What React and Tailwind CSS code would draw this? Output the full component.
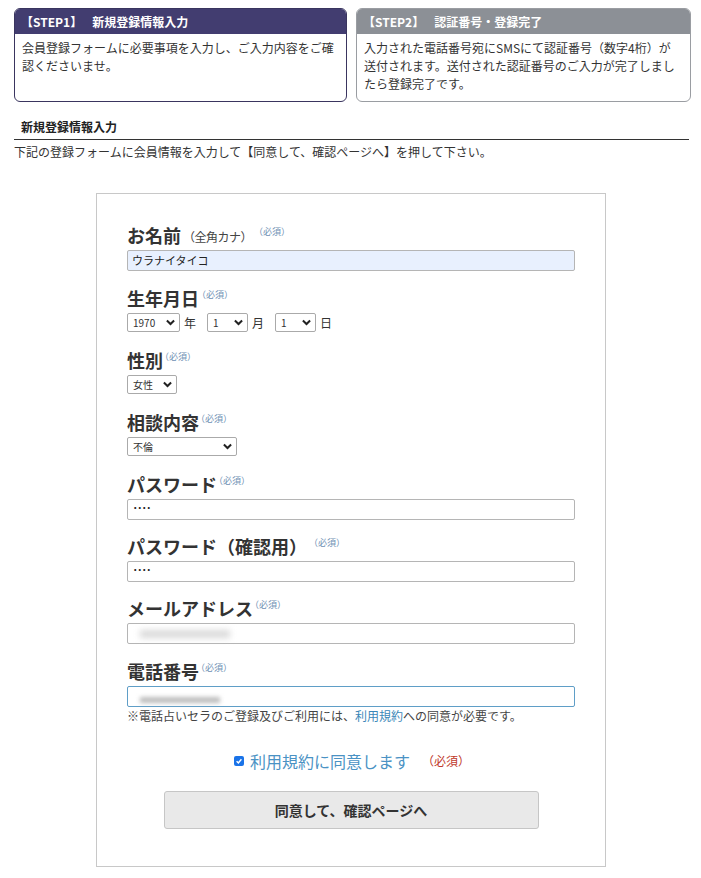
import React from "react";

const Req = ({ className = "" }) => (
  <span className={`text-[9px] text-[#6f8fb3] self-start mt-[1px] ${className}`}>（必須）</span>
);

const Label = ({ children, sub, gap = "ml-0" }) => (
  <div className="flex items-end h-[22px] mb-[4px]">
    <span className="text-[18px] font-bold text-[#333] leading-[22px]">{children}</span>
    {sub && <span className="text-[12px] text-[#444] ml-[2px] leading-[18px] tracking-[-0.5px]">{sub}</span>}
    <Req className={gap} />
  </div>
);

const Chevron = () => (
  <svg width="9" height="7" viewBox="0 0 10 7" className="shrink-0">
    <path d="M1 1.2 L5 5.2 L9 1.2" fill="none" stroke="#222" strokeWidth="2.2" />
  </svg>
);

const Select = ({ value, w }) => (
  <div className={`flex items-center justify-between h-[19px] border border-[#aaa] rounded-[2px] bg-white pl-[5px] pr-[4px] ${w}`}>
    <span className="text-[10px] text-[#333]">{value}</span>
    <Chevron />
  </div>
);

const Input = ({ children, className = "bg-white border-[#b5b5b5]" }) => (
  <div className={`h-[21px] w-[448px] border rounded-[2px] flex items-center px-[4px] ${className}`}>
    {children}
  </div>
);

const Dots = () => (
  <span className="text-[11px] font-bold text-[#222] leading-none tracking-[-2px] -mt-[4px]">····</span>
);

export default function App() {
  return (
    <div className="w-[701px] min-h-[878px] bg-white text-[#333] font-['Noto_Sans_CJK_JP','Noto_Sans',sans-serif]">
      {/* Steps */}
      <div className="flex gap-[9px] pl-[14px] pt-[8px]">
        <div className="w-[333px] h-[94px] border border-[#3a355f] rounded-[6px] overflow-hidden">
          <div className="h-[25px] bg-[#423d70] flex items-center pl-[6px] text-white text-[12px] font-bold">
            【STEP1】<span className="ml-[10px]">新規登録情報入力</span>
          </div>
          <p className="px-[7px] pt-[5px] text-[12px] leading-[18px] text-[#333]">
            会員登録フォームに必要事項を入力し、ご入力内容をご確認くださいませ。
          </p>
        </div>
        <div className="w-[335px] h-[94px] border border-[#9a9da2] rounded-[6px] overflow-hidden">
          <div className="h-[25px] bg-[#8c9096] flex items-center pl-[6px] text-white text-[12px] font-bold">
            【STEP2】<span className="ml-[10px]">認証番号・登録完了</span>
          </div>
          <p className="pl-[7px] pr-[14px] pt-[5px] text-[12px] leading-[18px] text-[#333]">
            入力された電話番号宛にSMSにて認証番号（数字4桁）が送付されます。送付された認証番号のご入力が完了しましたら登録完了です。
          </p>
        </div>
      </div>

      {/* Section title */}
      <div className="ml-[14px] w-[675px] mt-[16px] border-b border-[#333] pl-[7px] pb-[3px]">
        <h2 className="text-[12px] font-bold leading-[18px] text-[#222]">新規登録情報入力</h2>
      </div>
      <p className="ml-[14px] mt-[3px] text-[12px] leading-[18px] text-[#333]">
        下記の登録フォームに会員情報を入力して【同意して、確認ページへ】を押して下さい。
      </p>

      {/* Form */}
      <div className="ml-[96px] mt-[32px] w-[510px] border border-[#c8c8c8] px-[30px] pt-[30px] pb-[37px]">
        <div className="mb-[16px]">
          <Label sub="（全角カナ）" gap="ml-[2px]">お名前</Label>
          <Input className="bg-[#e8f0fe] border-[#b5b5b5]">
            <span className="text-[11px] text-[#222]">ウラナイタイコ</span>
          </Input>
        </div>

        <div className="mb-[17px]">
          <Label gap="-ml-[2px]">生年月日</Label>
          <div className="flex items-center text-[12px] text-[#333]">
            <Select value="1970" w="w-[53px]" />
            <span className="ml-[4px]">年</span>
            <Select value="1" w="w-[41px] ml-[11px]" />
            <span className="ml-[4px]">月</span>
            <Select value="1" w="w-[41px] ml-[11px]" />
            <span className="ml-[4px]">日</span>
          </div>
        </div>

        <div className="mb-[17px]">
          <Label gap="-ml-[3px]">性別</Label>
          <Select value="女性" w="w-[50px]" />
        </div>

        <div className="mb-[17px]">
          <Label gap="-ml-[3px]">相談内容</Label>
          <Select value="不倫" w="w-[110px]" />
        </div>

        <div className="mb-[15px]">
          <Label gap="-ml-[3px]">パスワード</Label>
          <Input>
            <Dots />
          </Input>
        </div>

        <div className="mb-[15px]">
          <Label gap="ml-[2px]">パスワード（確認用）</Label>
          <Input>
            <Dots />
          </Input>
        </div>

        <div className="mb-[16px]">
          <Label gap="-ml-[3px]">メールアドレス</Label>
          <Input>
            <div className="ml-[8px] h-[8px] w-[90px] bg-[#d9d9d9] blur-[3px]" />
          </Input>
        </div>

        <div>
          <Label gap="-ml-[3px]">電話番号</Label>
          <Input className="bg-white border-[#5f9ec7]">
            <div className="ml-[8px] mt-[6px] h-[6px] w-[80px] bg-[#bdbdbd] blur-[2px]" />
          </Input>
          <p className="mt-0 text-[12px] leading-[18px] text-[#444]">
            ※電話占いセラのご登録及びご利用には、<span className="text-[#3b87b8]">利用規約</span>への同意が必要です。
          </p>
        </div>

        <div className="flex items-center justify-center mt-[26px] pl-[2px]">
          <span className="w-[10px] h-[10px] rounded-[2px] bg-[#1a73e8] flex items-center justify-center">
            <svg width="8" height="8" viewBox="0 0 10 10">
              <path d="M2 5.2 L4.2 7.3 L8 2.8" fill="none" stroke="white" strokeWidth="1.8" />
            </svg>
          </span>
          <span className="ml-[6px] text-[16px] leading-[20px] text-[#4a92c4]">利用規約に同意します</span>
          <span className="ml-[12px] text-[12px] text-[#c0392b]">（必須）</span>
        </div>

        <div className="flex justify-center mt-[20px]">
          <button className="w-[375px] h-[38px] bg-[#e9e9e9] border border-[#c6c6c6] rounded-[3px] text-[14px] font-bold text-[#333]">
            同意して、確認ページへ
          </button>
        </div>
      </div>
    </div>
  );
}
